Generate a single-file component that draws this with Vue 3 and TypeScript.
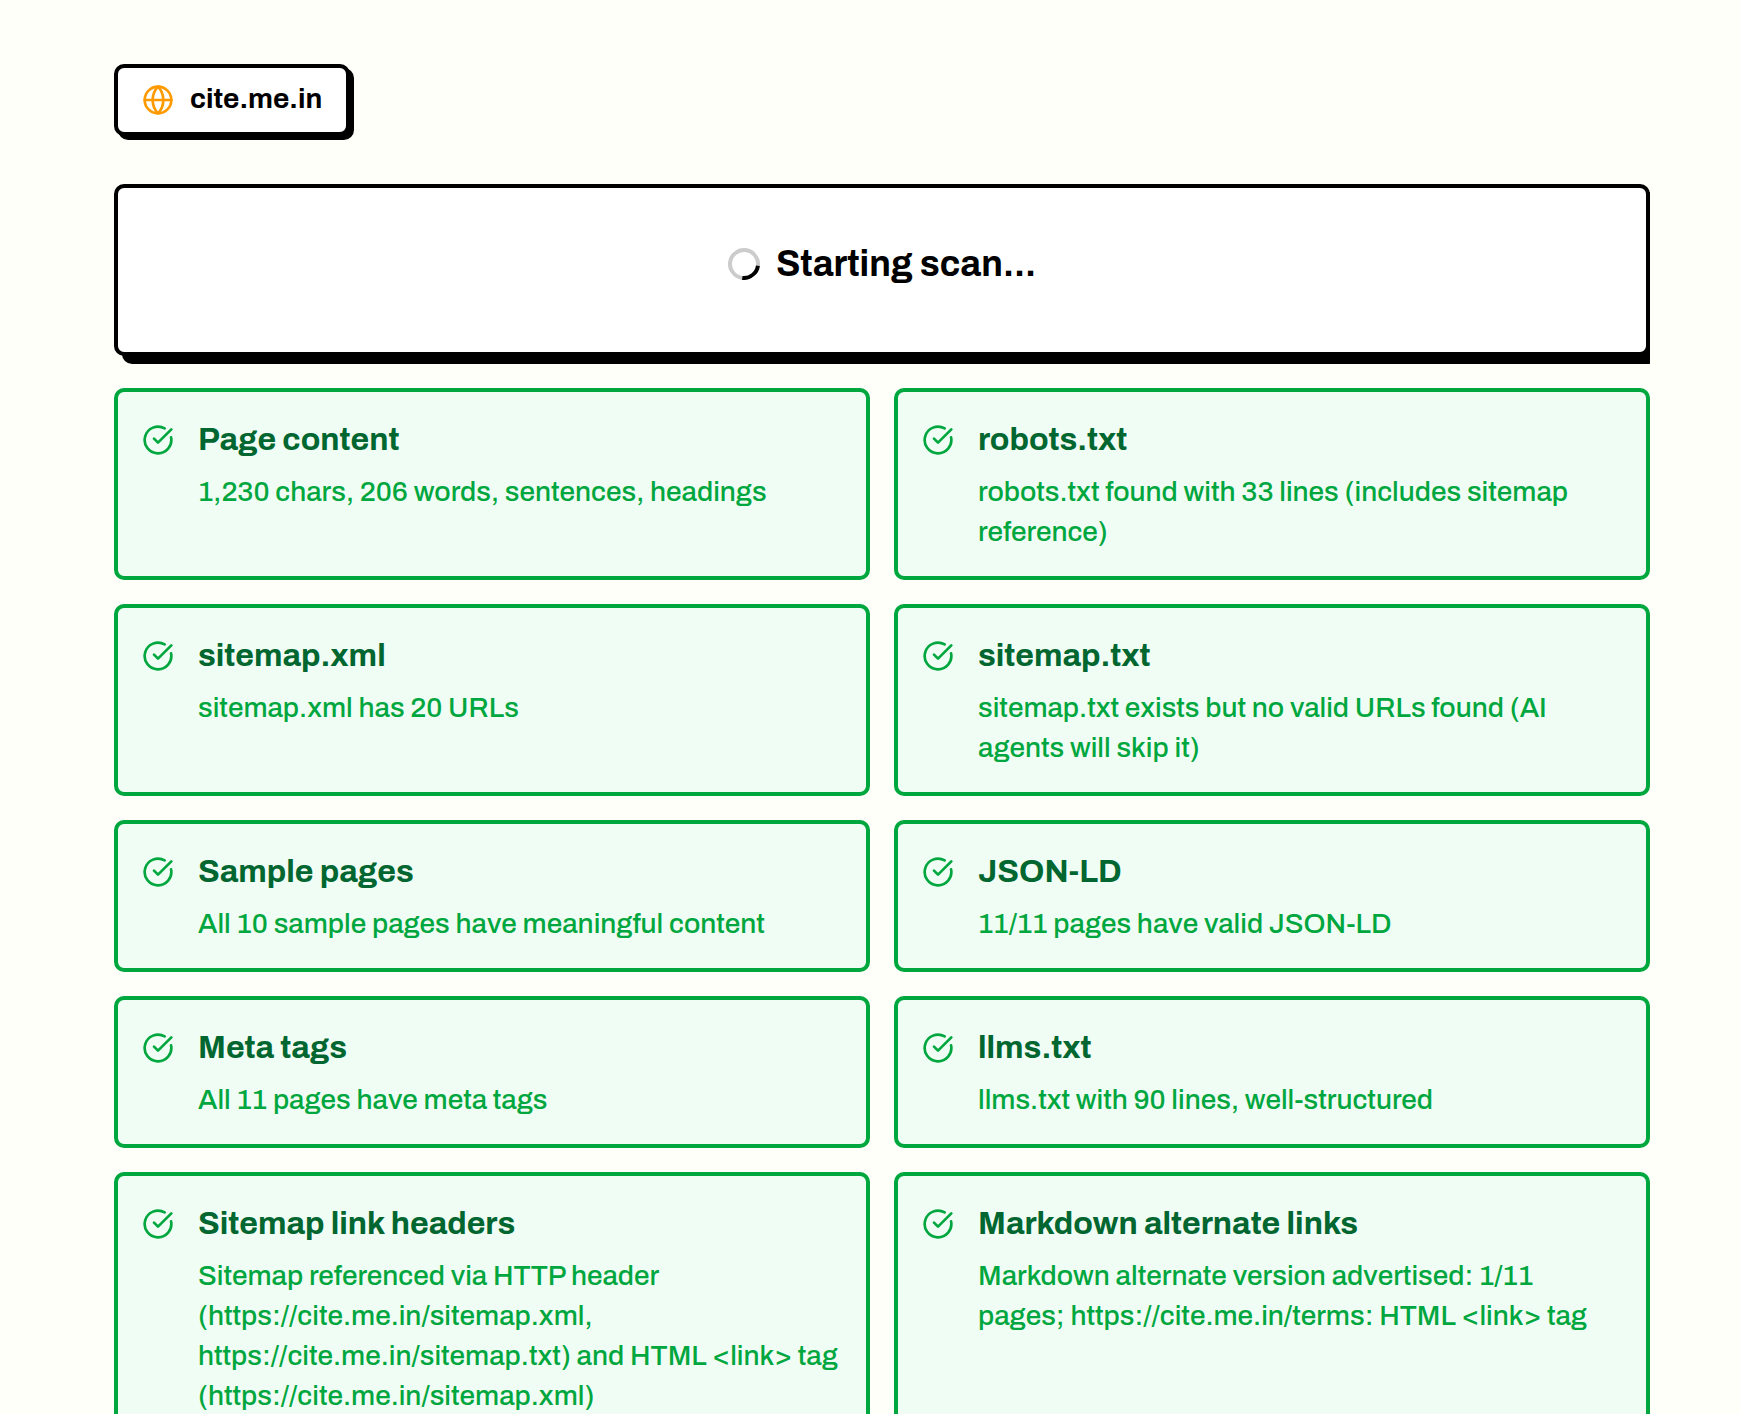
<script setup lang="ts">
interface Check {
  title: string
  detail: string
}

const site = 'cite.me.in'

const checks: Check[] = [
  { title: 'Page content', detail: '1,230 chars, 206 words, sentences, headings' },
  { title: 'robots.txt', detail: 'robots.txt found with 33 lines (includes sitemap reference)' },
  { title: 'sitemap.xml', detail: 'sitemap.xml has 20 URLs' },
  { title: 'sitemap.txt', detail: 'sitemap.txt exists but no valid URLs found (AI agents will skip it)' },
  { title: 'Sample pages', detail: 'All 10 sample pages have meaningful content' },
  { title: 'JSON-LD', detail: '11/11 pages have valid JSON-LD' },
  { title: 'Meta tags', detail: 'All 11 pages have meta tags' },
  { title: 'llms.txt', detail: 'llms.txt with 90 lines, well-structured' },
  {
    title: 'Sitemap link headers',
    detail:
      'Sitemap referenced via HTTP header (https://cite.me.in/sitemap.xml, https://cite.me.in/sitemap.txt) and HTML <link> tag (https://cite.me.in/sitemap.xml)',
  },
  {
    title: 'Markdown alternate links',
    detail: 'Markdown alternate version advertised: 1/11 pages; https://cite.me.in/terms: HTML <link> tag',
  },
]
</script>

<template>
  <div class="page">
    <main class="content">
      <div class="site">
        <svg class="icon globe" viewBox="0 0 24 24" aria-hidden="true">
          <circle cx="12" cy="12" r="10" />
          <path d="M12 2a14.5 14.5 0 0 0 0 20 14.5 14.5 0 0 0 0-20" />
          <path d="M2 12h20" />
        </svg>
        <span class="site-name">{{ site }}</span>
      </div>

      <div class="results">
        <section class="status" role="status">
          <span class="spinner" aria-hidden="true"></span>
          <h1 class="status-title">Starting scan...</h1>
        </section>

        <ul class="checks">
          <li v-for="check in checks" :key="check.title" class="check">
            <svg class="icon tick" viewBox="0 0 24 24" aria-hidden="true">
              <path d="M21.801 10A10 10 0 1 1 17 3.335" />
              <path d="m9 11 3 3L22 4" />
            </svg>
            <div class="check-body">
              <h2 class="check-title">{{ check.title }}</h2>
              <p class="check-detail">{{ check.detail }}</p>
            </div>
          </li>
        </ul>
      </div>
    </main>
  </div>
</template>

<style>
body {
  margin: 0;
  background: #fffffa;
}
</style>

<style scoped>
.page {
  box-sizing: border-box;
  height: 100vh;
  overflow: hidden;
  padding: 64px 90px 0 114px;
  background: #fffffa;
  color: #000;
  font-family: Archivo, 'Liberation Sans', Arial, sans-serif;
}

.content {
  display: flex;
  flex-direction: column;
  align-items: flex-start;
  gap: 48px;
  max-width: 1536px;
  margin: 0 auto;
}

.icon {
  flex: none;
  width: 32px;
  height: 32px;
  fill: none;
  stroke: currentColor;
  stroke-width: 2;
  stroke-linecap: round;
  stroke-linejoin: round;
}

.site {
  display: flex;
  align-items: center;
  gap: 16px;
  padding: 12px 24px;
  border: 4px solid #000;
  border-radius: 10px;
  background: #fff;
  box-shadow: 4px 4px 0 #000;
}

.globe {
  color: #fe9a00;
}

.site-name {
  padding-bottom: 2px;
  font-size: 28px;
  font-weight: 700;
  line-height: 38px;
}

/* The hard shadow is cut off at the right edge of the column. */
.results {
  display: flex;
  flex-direction: column;
  gap: 32px;
  width: 100%;
  overflow-x: clip;
}

.status {
  display: flex;
  align-items: center;
  justify-content: center;
  gap: 16px;
  padding: 48px 48px 60px;
  border: 4px solid #000;
  border-radius: 10px;
  background: #fff;
  box-shadow: 8px 8px 0 #000;
}

.spinner {
  box-sizing: border-box;
  width: 32px;
  height: 32px;
  border: 4px solid #ccc;
  border-right-color: #000;
  border-radius: 50%;
  transform: rotate(52deg);
}

.status-title {
  margin: 0;
  font-size: 36px;
  font-weight: 700;
  line-height: 56px;
}

.checks {
  display: grid;
  grid-template-columns: repeat(2, minmax(0, 1fr));
  gap: 24px;
  margin: 0;
  padding: 0;
  list-style: none;
}

.check {
  display: flex;
  align-items: flex-start;
  gap: 24px;
  padding: 24px;
  border: 4px solid #00a63e;
  border-radius: 10px;
  background: #f0fdf4;
  color: #00a63e;
}

.tick {
  margin-top: 8px;
}

.check-body {
  min-width: 0;
}

.check-title {
  margin: 0 0 8px;
  color: #016630;
  font-size: 32px;
  font-weight: 700;
  line-height: 48px;
}

.check-detail {
  margin: 0;
  font-size: 28px;
  font-weight: 500;
  line-height: 40px;
}
</style>
